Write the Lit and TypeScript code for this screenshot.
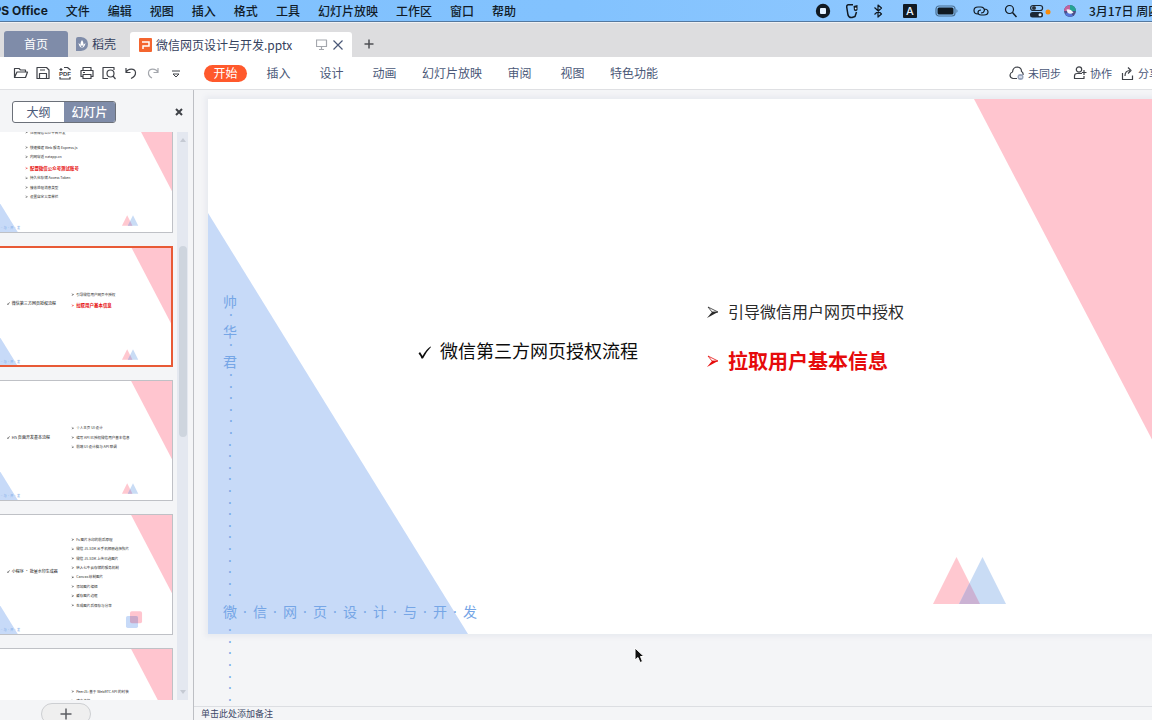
import { LitElement, html, svg, css } from "lit";
import { customElement, property } from "lit/decorators.js";
import { classMap } from "lit/directives/class-map.js";

interface Bullet {
  text: string;
  y: number;
  strong?: boolean;
}

interface Slide {
  title?: string;
  bulletX: number;
  bullets: Bullet[];
  logo: "triangles" | "squares";
}

const slides: Slide[] = [
  {
    bulletX: 293,
    logo: "triangles",
    bullets: [
      { text: "注册微信公众平台开发", y: 86 },
      { text: "快速搭建 Web 服务 Express.js", y: 154 },
      { text: "内网穿透 natapp.cn", y: 196 },
      { text: "配置微信公众号测试账号", y: 247, strong: true },
      { text: "持久化存储 Access Token", y: 291 },
      { text: "接收处理消息类型", y: 333 },
      { text: "设置自定义菜单栏", y: 375 },
    ],
  },
  {
    title: "微信第三方网页授权流程",
    bulletX: 500,
    logo: "triangles",
    bullets: [
      { text: "引导微信用户网页中授权", y: 213 },
      { text: "拉取用户基本信息", y: 262, strong: true },
    ],
  },
  {
    title: "H5 页面开发基本流程",
    bulletX: 500,
    logo: "triangles",
    bullets: [
      { text: "个人主页 UI 设计", y: 211 },
      { text: "编写 API 已授权微信用户基本信息", y: 253 },
      { text: "前端 UI 设计稿与 API 联调", y: 295 },
    ],
  },
  {
    title: "小程序 · 批量水印生成器",
    bulletX: 500,
    logo: "squares",
    bullets: [
      { text: "Fs 图片水印的前后原理", y: 110 },
      { text: "微信 JS-SDK 从手机相册选择照片", y: 152 },
      { text: "微信 JS-SDK 上传已选图片", y: 194 },
      { text: "转入七牛云存储的服务机制", y: 236 },
      { text: "Canvas 绘制图片", y: 278 },
      { text: "添加图片编辑", y: 320 },
      { text: "缓存图片边框", y: 362 },
      { text: "生成图片后保存与分享", y: 404 },
    ],
  },
  {
    bulletX: 500,
    logo: "triangles",
    bullets: [
      { text: "PeerJS: 基于 WebRTC API 的封装", y: 190 },
      { text: "建立连接", y: 232 },
    ],
  },
];

const footerChars = [..."微·信·网·页·设·计·与·开·发"];
const footerX = footerChars.map((_, i) => 22 + i * 15).join(" ");
const DOTS = 29;
const dotsY = Array.from({ length: DOTS }, (_, i) => Math.round(281 + i * 11.6)).join(" ");
const dotsX = Array.from({ length: DOTS }, (_, i) => (i < 6 ? 23 : 22)).join(" ");

@customElement("slide-view")
class SlideView extends LitElement {
  @property({ attribute: false }) slide!: Slide;
  @property({ type: Boolean }) thumbnail = false;

  static styles = css`
    :host {
      display: block;
    }
    svg {
      display: block;
      width: 100%;
      height: 100%;
      overflow: visible;
    }
    text {
      font-family: "Noto Sans CJK SC", sans-serif;
    }
    .title {
      font-size: 18px;
      fill: #0c0c0c;
    }
    .item {
      font-size: 16px;
      fill: #2a2a2a;
    }
    .strong {
      font-size: 20px;
      font-weight: 700;
      fill: #e60b0b;
    }
    .faint {
      font-family: "Noto Sans", "Noto Sans CJK SC", sans-serif;
      font-size: 14px;
      fill: #76a6e6;
      text-anchor: middle;
    }
    .arrow {
      fill: #2a2a2a;
      stroke: #2a2a2a;
    }
    .arrow.hot {
      fill: #e60b0b;
      stroke: #e60b0b;
    }
  `;

  private bullet(b: Bullet, x: number) {
    return svg`
      <g class=${classMap({ arrow: true, hot: !!b.strong })}>
        <path d="M${x} ${b.y - 5}L${x + 10} ${b.y}H${x + 4}Z" fill="none" stroke-width="0.800"></path>
        <path d="M${x + 4} ${b.y}H${x + 10}L${x - 1} ${b.y + 6}Z" stroke="none"></path>
      </g>
      <text class=${b.strong ? "strong" : "item"} x=${x + 20} y=${b.y + (b.strong ? 8 : 6)}>${b.text}</text>`;
  }

  private sideText() {
    return svg`
      <text class="faint" x="22 23 22 23 22" y="208 221 238 251 268">帅·华·君</text>
      <text class="faint" x=${dotsX} y=${dotsY}>${"·".repeat(DOTS)}</text>`;
  }

  render() {
    const s = this.slide;
    return html`
      <svg viewBox="0 0 949 535" preserveAspectRatio="xMaxYMin slice">
        <path d="M0 114L260 535H0Z" fill="#c7daf8"></path>
        <path d="M766 0H949V350Z" fill="#ffc5cf"></path>
        ${s.logo === "triangles"
          ? svg`
            <path d="M748.500 458L772 505H725Z" fill="#ffc8d0"></path>
            <path d="M774.500 458L798 505H751Z" fill="#c9dcf5"></path>
            <path d="M761.500 484L772 505H751Z" fill="#cbb2d3"></path>`
          : svg`
            <rect x="761" y="431" width="54" height="54" rx="8" fill="#ffc5cf"></rect>
            <rect x="743" y="452" width="54" height="54" rx="8" fill="#c7daf8"></rect>
            <path d="M761 452H789Q797 452 797 460V485H769Q761 485 761 477Z" fill="#cba9c9"></path>`}
        ${this.thumbnail ? "" : this.sideText()}
        <text class="faint" x=${footerX} y="518">${footerChars.join("")}</text>
        ${s.title
          ? svg`
            <path d="M210.500 254.500L212 253L214.500 257Q218 250.500 222.500 247.500L223 248Q218 253 215 259.500H213.500Q212.500 256.500 210.500 254.500Z" fill="#0c0c0c"></path>
            <text class="title" x="232" y="259">${s.title}</text>`
          : ""}
        ${s.bullets.map((b) => this.bullet(b, s.bulletX))}
      </svg>
    `;
  }
}

const line = (body: unknown, w = 16, h = 16, cls = "ic") =>
  html`<svg class=${cls} width=${w} height=${h} viewBox="0 0 ${w} ${h}" aria-hidden="true">${body}</svg>`;

const tools = [
  svg`<path d="M1.500 12.500V3.500H6L7.500 5H12.500V7M1.500 12.500L4 7H14.500L12.500 12.500Z"></path>`,
  svg`<path d="M2 2.500H11.500L14 5V13.500H2ZM4.500 13.500V8.500H11.500V13.500M5 5H10"></path>`,
  svg`<path d="M2.500 4.500H5.500M4 3V6M7 2.500H10.500L13.500 5M3 12V14H13V12"></path><text class="pdf" x="8" y="11">PDF</text>`,
  svg`<path d="M4 5.500V2.500H12V5.500M4 11.500H2V5.500H14V11.500H12M4 9.500H12V13.500H4ZM4 7.500H6"></path>`,
  svg`<path d="M7 13.500H2V2.500H13V5"></path><circle cx="9.500" cy="8.500" r="3.500"></circle><path d="M12 11L14.500 14"></path>`,
  svg`<path d="M3 3V7.500H7.500M3 7.500C5 3 12 3 12.500 7.500C12.800 10.500 10 12.500 8 13.500"></path>`,
  svg`<path class="dim" d="M13 3V7.500H8.500M13 7.500C11 3 4 3 3.500 7.500C3.200 10.500 6 12.500 7 13"></path>`,
  svg`<path d="M5 6H13M6 9H12L9 12Z" stroke-width="1"></path>`,
];

const menus = ["文件", "编辑", "视图", "插入", "格式", "工具", "幻灯片放映", "工作区", "窗口", "帮助"];
const ribbon = ["开始", "插入", "设计", "动画", "幻灯片放映", "审阅", "视图", "特色功能"];

@customElement("app-root")
class AppRoot extends LitElement {
  static styles = css`
    :host {
      display: flex;
      flex-direction: column;
      height: 100vh;
      overflow: hidden;
      background: #f4f5f7;
      font: 12px/16px "Noto Sans CJK SC", sans-serif;
      color: #4a5878;
    }
    button {
      font: inherit;
      color: inherit;
      background: none;
      border: 0;
      padding: 0;
      white-space: nowrap;
    }
    svg {
      display: block;
      flex: none;
    }
    .menubar {
      display: flex;
      justify-content: space-between;
      align-items: center;
      box-sizing: border-box;
      height: 22px;
      flex: none;
      overflow: hidden;
      background: linear-gradient(90deg, #80c1fe, #82c2fe 50%, #96cbff);
      border-bottom: 1px solid #54789f;
      color: #111c28;
    }
    .menus {
      display: flex;
      gap: 18px;
      margin-left: -19px;
      font-weight: 500;
    }
    .brand {
      font-family: Inter, sans-serif;
      font-weight: 700;
    }
    .status {
      display: flex;
      align-items: center;
      gap: 13px;
      font-weight: 500;
    }
    .date {
      width: 63px;
      overflow: hidden;
      white-space: nowrap;
    }
    .tabs {
      display: flex;
      align-items: flex-end;
      flex: none;
      height: 34px;
      border-top: 1px solid #f0f1f3;
      background: #dddddf;
      padding-left: 4px;
    }
    .tab {
      display: flex;
      align-items: center;
      height: 26px;
      color: #35415e;
    }
    .home {
      width: 64px;
      justify-content: center;
      border-radius: 3px 3px 0 0;
      background: #7f8ca9;
      color: #fff;
    }
    .docer {
      gap: 4px;
      padding: 0 14px 0 8px;
    }
    .file {
      box-sizing: border-box;
      width: 222px;
      height: 25px;
      padding: 0 8px 0 9px;
      gap: 4px;
      border-radius: 3px 3px 0 0;
      background: #fff;
    }
    .file .name {
      flex: 1;
      white-space: nowrap;
    }
    .add {
      padding-left: 11px;
    }
    .toolbar {
      display: flex;
      align-items: center;
      flex: none;
      height: 32px;
      background: #fff;
      border-bottom: 1px solid #dfe0e3;
      overflow: hidden;
    }
    .tools {
      display: flex;
      gap: 6px;
      padding: 0 16px 0 13px;
    }
    .ic {
      fill: none;
      stroke: #3f4248;
      stroke-width: 1.2;
      stroke-linejoin: round;
    }
    .dim {
      stroke: #a4a7ad;
    }
    .pdf {
      font: 700 6px "Liberation Sans", sans-serif;
      fill: #3f4248;
      stroke: none;
      text-anchor: middle;
    }
    .ribbon {
      display: flex;
      flex: 1;
    }
    .ribbon button {
      min-width: 53px;
      padding: 0 11px;
    }
    .ribbon .on {
      padding: 0 5px;
      color: #fff;
    }
    .pill {
      display: block;
      border-radius: 9px;
      height: 17px;
      line-height: 16px;
      background: #ff592c;
    }
    .share {
      display: flex;
      gap: 12px;
      font-size: 11px;
    }
    .share button {
      display: flex;
      align-items: center;
      gap: 3px;
    }
    .share .cut {
      width: 32px;
      margin-left: -4px;
      overflow: hidden;
    }
    .body {
      display: flex;
      flex: 1;
      min-height: 0;
    }
    .panel {
      display: flex;
      flex-direction: column;
      flex: none;
      width: 193px;
      border-right: 1px solid #bdbfc4;
    }
    .head {
      display: flex;
      justify-content: space-between;
      align-items: center;
      flex: none;
      height: 40px;
      padding: 2px 8px 0 12px;
    }
    .seg {
      display: flex;
      border: 1px solid #6b7079;
      border-radius: 3px;
      background: #fff;
      overflow: hidden;
    }
    .seg button {
      width: 51px;
      height: 20px;
      line-height: 20px;
    }
    .seg .on {
      background: #7f8ca9;
      color: #fff;
      font-weight: 500;
    }
    .scroller {
      display: flex;
      justify-content: space-between;
      flex: 1;
      min-height: 0;
      overflow: hidden;
      padding-right: 5px;
    }
    .thumbs {
      display: flex;
      flex-direction: column;
      gap: 15px;
      list-style: none;
      padding: 0;
      margin: -19px 0 0 -40px;
    }
    .thumb {
      display: block;
      width: 212px;
      height: 119px;
      overflow: hidden;
      background: #fff;
      box-shadow: 0 0 0 1px #bfc1c6;
    }
    .thumb slide-view {
      width: 100%;
      height: 100%;
    }
    .thumb.on {
      box-shadow: none;
      outline: 2px solid #e85a36;
      outline-offset: -1px;
    }
    .bar {
      display: flex;
      flex-direction: column;
      align-items: center;
      width: 11px;
      background: #e4e8f0;
      padding: 6px 0;
      justify-content: space-between;
      box-sizing: border-box;
    }
    .rail {
      display: flex;
      flex: 1;
      padding-top: 104px;
    }
    .knob {
      width: 8px;
      height: 43%;
      border-radius: 4px;
      background: #ced5de;
    }
    .foot {
      display: flex;
      flex: none;
      height: 20px;
      padding: 3px 0 0 41px;
      box-sizing: border-box;
      overflow: hidden;
    }
    .new {
      display: flex;
      align-items: center;
      justify-content: center;
      box-sizing: border-box;
      width: 50px;
      height: 22px;
      border: 1px solid #cdcfd2;
      border-radius: 11px;
      background: #efefef;
    }
    .work {
      display: flex;
      flex-direction: column;
      flex: 1;
      min-width: 0;
    }
    .stage {
      position: relative;
      flex: 1;
      min-height: 0;
      padding: 9px 0 72px 14px;
      overflow: hidden;
    }
    .page {
      height: 100%;
      aspect-ratio: 949 / 535;
      background: #fff;
      box-shadow: 0 0 5px 3px #e9ebf0;
    }
    .cursor {
      position: absolute;
      left: 440px;
      top: 557px;
    }
    .notes {
      flex: none;
      height: 12px;
      border: 0;
      border-top: 1px solid #dcdee2;
      padding: 1px 0 0 7px;
      outline: 0;
      background: none;
      font: 9px/12px "Noto Sans CJK SC", sans-serif;
      color: #3c4766;
    }
    .notes::placeholder {
      color: #3c4766;
      opacity: 1;
    }
  `;

  private statusIcons() {
    return html`
      ${line(svg`<circle cx="8" cy="8" r="7.200" fill="#111a22" stroke="none"></circle><rect x="5" y="5" width="6" height="6" rx="1" fill="#e4f2ff" stroke="none"></rect>`)}
      ${line(svg`<path d="M9 1.800H4Q2.500 2 2.700 4L4 12Q5 15 8 14.500L11 13.500L12.500 9" stroke="#111a22" stroke-width="1.500"></path><path d="M9.500 3L13.500 2V7Q12.500 8.500 10 7.500Z" fill="#111a22" stroke="none"></path><circle cx="11.700" cy="5.500" r="0.900" fill="#d8ecff" stroke="none"></circle>`, 14)}
      ${line(svg`<path d="M3.500 4.500L10.500 11L7 14V2L10.500 5L3.500 11.500" stroke="#111a22"></path>`, 14)}
      <svg width="24" height="16" viewBox="0 0 24 16" aria-hidden="true">
        <rect x="5" y="1" width="14" height="14" rx="1" fill="#111a22"></rect>
        <text x="12" y="12" text-anchor="middle" font-family="Inter" font-size="11" fill="#e4f2ff">A</text>
      </svg>
      ${line(svg`<rect x="1" y="3" width="19" height="10" rx="3" stroke="#4a6f92"></rect><rect x="2.500" y="4.500" width="16" height="7" rx="1.500" fill="#111a22" stroke="none"></rect><path d="M21.500 6V10Q23.500 8 21.500 6Z" fill="#4a6f92" stroke="none"></path>`, 24)}
      ${line(svg`<path d="M6 11Q2 11 2 7.500Q2 4 6 4H9Q12 4 12.500 7Q12 10 9 10M12 6Q16 6 16 9Q16 12 12 12H9Q6 12 6 9.500Q6 7 9 7" stroke="#111a22" stroke-width="1.200"></path>`, 18)}
      ${line(svg`<circle cx="6.500" cy="6.500" r="4" stroke="#111a22"></circle><path d="M9.500 9.500L13.500 14" stroke="#111a22" stroke-width="1.500"></path>`, 14)}
      ${line(svg`<rect x="0.600" y="2.500" width="12" height="5" rx="2.500" stroke="#1c2834"></rect><circle cx="4" cy="5" r="1.500" fill="#1c2834"></circle><rect x="0" y="9" width="13" height="5.500" rx="2.500" fill="#1c2834" stroke="none"></rect><circle cx="10" cy="11.700" r="1.500" fill="#d8ecff" stroke="none"></circle><circle cx="18" cy="9" r="2.500" fill="#f98b08" stroke="none"></circle>`, 21)}
      <svg width="12" height="12" viewBox="0 0 12 12" aria-hidden="true">
        <circle cx="6" cy="6" r="6" fill="#4c4f86"></circle>
        <path d="M6 0A6 6 0 0 0 0 6L6 6Z" fill="#c4639d"></path>
        <path d="M6 0A6 6 0 0 1 12 6L6 6Z" fill="#25a493"></path>
        <path d="M1 9A6 6 0 0 0 9 11L6 6Z" fill="#5476d8"></path>
        <path d="M2.500 4.500Q6 3 9.500 7.500Q6 10 3.500 7.500Z" fill="#f1f3fb"></path>
      </svg>
    `;
  }

  render() {
    return html`
      <header class="menubar">
        <nav class="menus">
          <button class="brand">WPS Office</button>
          ${menus.map((m) => html`<button>${m}</button>`)}
        </nav>
        <div class="status">${this.statusIcons()}<span class="date">3月17日 周四</span></div>
      </header>

      <div class="tabs">
        <button class="tab home">首页</button>
        <button class="tab docer">
          <svg width="12" height="14" viewBox="0 0 12 14" aria-hidden="true">
            <path d="M0 2Q0 0 2 0H5Q12 1 12 7Q12 13 5 14H0Z" fill="#7f8ca9"></path>
            <path d="M6 3Q9 7 6 11Q3 7 6 3M2.500 6Q3 10 6 11Q9 10 9.500 6L6 9Z" fill="#fff"></path>
          </svg>
          稻壳
        </button>
        <div class="tab file">
          <svg width="13" height="14" viewBox="0 0 13 14" aria-hidden="true">
            <rect width="13" height="14" rx="1" fill="#f4652f"></rect>
            <path d="M3 4H10V8H4V11" fill="none" stroke="#fff" stroke-width="1.500"></path>
          </svg>
          <span class="name">微信网页设计与开发.pptx</span>
          ${line(svg`<path class="dim" d="M0.500 3H10.500V9.500H0.500ZM5.500 9.500V12M3 12.500H8"></path>`, 12)}
          <button aria-label="关闭">${line(svg`<path d="M1.500 3.500L10.500 12.500M10.500 3.500L1.500 12.500" stroke="#4a5878"></path>`, 12)}</button>
        </div>
        <button class="tab add" aria-label="新建">${line(svg`<path d="M6 3.500V12.500M1.500 8H10.500" stroke="#4f5055" stroke-width="1.500"></path>`, 12)}</button>
      </div>

      <div class="toolbar">
        <div class="tools">${tools.map((t) => html`<button>${line(t)}</button>`)}</div>
        <nav class="ribbon">
          ${ribbon.map((r, i) => (i === 0 ? html`<button class="on"><span class="pill">${r}</span></button>` : html`<button>${r}</button>`))}
        </nav>
        <div class="share">
          <button>
            ${line(svg`<path d="M8 13.500H4Q1 13 1 10Q1.500 7.500 3.500 7Q4 2 8.500 2Q12.500 2.500 12.500 6.500Q14.500 7.500 14 10"></path><circle cx="11.500" cy="12" r="3" fill="#9aa5bd" stroke="none"></circle><path d="M10 12H13" stroke="#fff"></path>`)}
            未同步
          </button>
          <button>
            ${line(svg`<circle cx="6" cy="4.500" r="2.700"></circle><path d="M9 8.500H4Q1.500 8.500 1.500 11V13.500H11V11M11 5V10M8.800 7.500H13.500"></path>`, 14)}
            协作
          </button>
          <button class="cut">
            ${line(svg`<path d="M2.500 8V14.500H12.500V10.500M5 11Q5 5.500 10 5.500M8 2.500L11 5.500L8 8.500"></path>`, 15)}
            分享
          </button>
        </div>
      </div>

      <div class="body">
        <aside class="panel">
          <div class="head">
            <div class="seg"><button>大纲</button><button class="on">幻灯片</button></div>
            <button aria-label="关闭窗格">${line(svg`<path d="M3 5L9 11M9 5L3 11" stroke-width="2"></path>`, 12)}</button>
          </div>
          <div class="scroller">
            <ul class="thumbs">
              ${slides.map(
                (s, i) => html`<li>
                  <button class=${classMap({ thumb: true, on: i === 1 })}><slide-view thumbnail .slide=${s}></slide-view></button>
                </li>`,
              )}
            </ul>
            <div class="bar">
              <svg width="6" height="4" viewBox="0 0 6 4"><path d="M0 4L3 0L6 4Z" fill="#c5cad3"></path></svg>
              <div class="rail"><div class="knob"></div></div>
              <svg width="6" height="4" viewBox="0 0 6 4"><path d="M0 0L3 4L6 0Z" fill="#c5cad3"></path></svg>
            </div>
          </div>
          <div class="foot">
            <button class="new" aria-label="新建幻灯片">${line(svg`<path d="M6 2.500V13.500M0.500 8H11.500" stroke="#5c5e63" stroke-width="1.500"></path>`, 12)}</button>
          </div>
        </aside>

        <main class="work">
          <div class="stage">
            <slide-view class="page" .slide=${slides[1]}></slide-view>
            <svg class="cursor" width="12" height="17" viewBox="0 0 12 17" aria-hidden="true">
              <path d="M1 1V13L4 10.500L6 15.500L8.500 14.500L6.500 9.500H10Z" fill="#111" stroke="#fff"></path>
            </svg>
          </div>
          <input class="notes" aria-label="备注" placeholder="单击此处添加备注" />
        </main>
      </div>
    `;
  }
}
